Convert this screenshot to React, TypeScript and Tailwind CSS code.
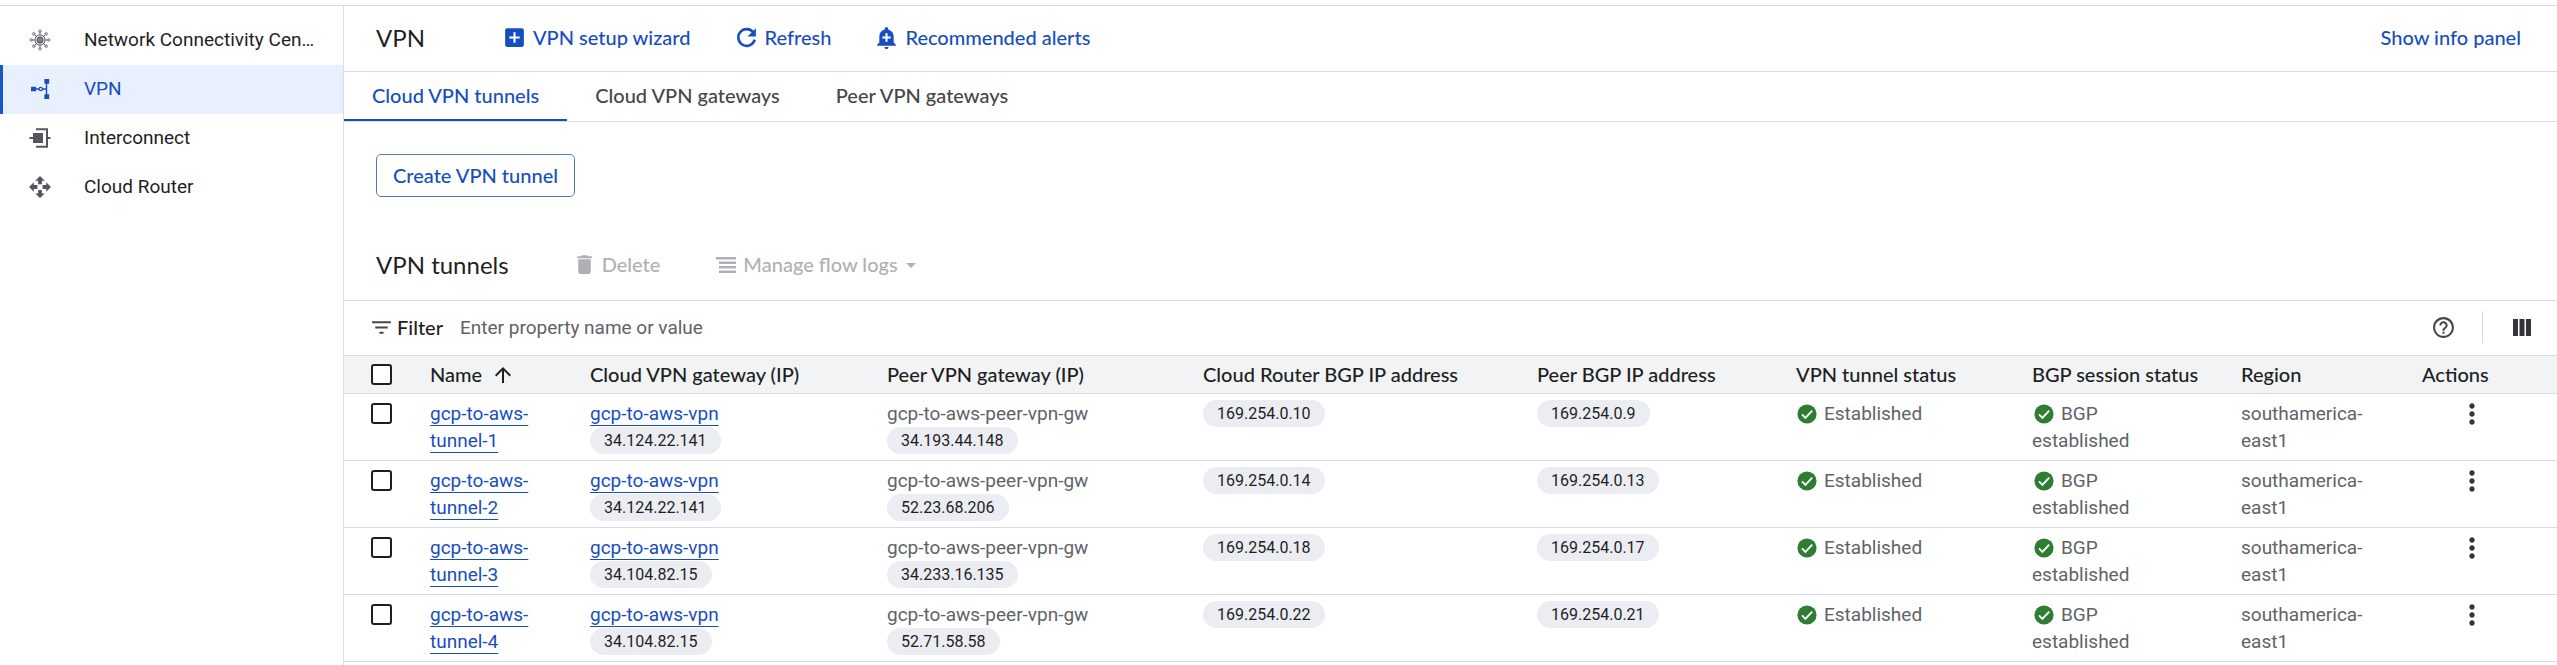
import type { ReactNode } from "react";
import {
  MdAddAlert,
  MdAddBox,
  MdArrowDropDown,
  MdArrowUpward,
  MdDelete,
  MdFilterList,
  MdHelpOutline,
  MdMoreVert,
} from "react-icons/md";

const display = "font-['Lato','Liberation_Sans',sans-serif]";

function HubIcon() {
  const angles = [0, 45, 90, 135, 180, 225, 270, 315];
  return (
    <svg viewBox="0 0 24 24" className="size-6" fill="none" stroke="currentColor" aria-hidden="true">
      <circle cx="12" cy="12" r="5" strokeWidth="1" />
      <circle cx="12" cy="12" r="3.5" fill="currentColor" stroke="none" />
      <path d="M9.5 11h5M9.5 13h5" stroke="white" strokeWidth="0.5" />
      {angles.map((a) => (
        <g key={a} transform={`rotate(${a} 12 12)`}>
          <path d="M12 6.8V4.6" strokeWidth="1" />
          <circle cx="12" cy="3.2" r="1.2" strokeWidth="0.9" />
        </g>
      ))}
    </svg>
  );
}

function VpnIcon() {
  return (
    <svg viewBox="0 0 24 24" className="size-6" aria-hidden="true">
      <path d="M7 12h11.5M18.5 4v16" stroke="currentColor" strokeWidth="1.4" fill="none" />
      <path d="M3 9.8h5v4.4H3zM16.4 2h4.8v4.8h-4.8zM16.4 17.2h4.8V22h-4.8z" fill="currentColor" />
      <circle cx="12.7" cy="12" r="1.7" fill="#e8f0fe" stroke="currentColor" strokeWidth="1.2" />
    </svg>
  );
}

function InterconnectIcon() {
  return (
    <svg viewBox="0 0 24 24" className="size-6" aria-hidden="true">
      <path d="M5 7h10v10H5z" fill="currentColor" />
      <path d="M1.5 12H5M20 12h2.5M8 3.2h11v17.6H8" stroke="currentColor" strokeWidth="2" fill="none" />
    </svg>
  );
}

function RouterIcon() {
  return (
    <svg viewBox="0 0 24 24" className="size-6" fill="currentColor" aria-hidden="true">
      <path d="M12 1l4.8 4.8h-2.9v3.4h-3.8V5.8H7.2zM12 23l-4.8-4.4h2.9V15h3.8v3.6h2.9z" />
      <path d="M1 12l4.8-4.8v2.9h3.6v3.8H5.8v2.9zM23 12l-4.8-4.8v2.9h-3.6v3.8h3.6v2.9z" />
    </svg>
  );
}

function RefreshIcon() {
  return (
    <svg viewBox="0 0 24 24" className="size-[25px]" aria-hidden="true">
      <path d="M18.6 7.2A8 8 0 1 0 19.9 14" fill="none" stroke="currentColor" strokeWidth="2.5" />
      <path d="M21 3v8h-8z" fill="currentColor" />
    </svg>
  );
}

function LogsIcon() {
  return (
    <svg viewBox="0 0 20 16" className="h-4 w-5" aria-hidden="true">
      <path d="M0 1.2h20M3 5.7h17M3 10.2h17M3 14.7h17" stroke="currentColor" strokeWidth="2.5" />
    </svg>
  );
}

function ColumnsIcon() {
  return (
    <svg viewBox="0 0 18 17" className="h-[17px] w-[18px]" fill="currentColor" aria-hidden="true">
      <path d="M0 0h5v17H0zM6.5 0h5v17h-5zM13 0h5v17h-5z" />
    </svg>
  );
}

function StatusIcon() {
  return (
    <svg viewBox="0 0 20 20" className="inline size-5 align-[-4px]" aria-hidden="true">
      <circle cx="10" cy="10" r="9.6" fill="#2e7d32" />
      <path d="M5 10.4l3.4 3.4L15.2 6.6" fill="none" stroke="white" strokeWidth="1.9" />
    </svg>
  );
}

function ToolbarButton({ icon, children }: { icon: ReactNode; children: ReactNode }) {
  return (
    <button type="button" className={`${display} flex items-center gap-[6px] text-[20px] font-medium text-[#174ebf]`}>
      {icon}
      {children}
    </button>
  );
}

function CheckBox({ label }: { label: string }) {
  return (
    <input
      type="checkbox"
      aria-label={label}
      className="block size-[21px] appearance-none rounded-[3px] border-2 border-[#1f1f1f] bg-white checked:bg-[#174ebf]"
    />
  );
}

function Chip({ children }: { children: ReactNode }) {
  return (
    <span className="block w-fit rounded-full bg-[#ecedf2] px-[14px] text-[16px] leading-[27px] text-[#1f1f1f]">
      {children}
    </span>
  );
}

function CellLink({ children }: { children: ReactNode }) {
  return (
    <a
      href="#"
      className="text-[#174ebf] underline decoration-1 underline-offset-[5px] [text-decoration-skip-ink:none]"
    >
      {children}
    </a>
  );
}

const navItems = [
  { label: "Network Connectivity Cen…", icon: <HubIcon />, active: false },
  { label: "VPN", icon: <VpnIcon />, active: true },
  { label: "Interconnect", icon: <InterconnectIcon />, active: false },
  { label: "Cloud Router", icon: <RouterIcon />, active: false },
];

const tabs = ["Cloud VPN tunnels", "Cloud VPN gateways", "Peer VPN gateways"];

const columns = [
  "Cloud VPN gateway (IP)",
  "Peer VPN gateway (IP)",
  "Cloud Router BGP IP address",
  "Peer BGP IP address",
  "VPN tunnel status",
  "BGP session status",
  "Region",
  "Actions",
];

const tunnels = [
  { name: "gcp-to-aws-tunnel-1", ip: "34.124.22.141", peerIp: "34.193.44.148", bgp: "169.254.0.10", peerBgp: "169.254.0.9" },
  { name: "gcp-to-aws-tunnel-2", ip: "34.124.22.141", peerIp: "52.23.68.206", bgp: "169.254.0.14", peerBgp: "169.254.0.13" },
  { name: "gcp-to-aws-tunnel-3", ip: "34.104.82.15", peerIp: "34.233.16.135", bgp: "169.254.0.18", peerBgp: "169.254.0.17" },
  { name: "gcp-to-aws-tunnel-4", ip: "34.104.82.15", peerIp: "52.71.58.58", bgp: "169.254.0.22", peerBgp: "169.254.0.21" },
];

export default function App() {
  return (
    <div className="min-h-screen bg-white pt-[5px] font-['Roboto','Liberation_Sans',sans-serif] text-[19px] leading-[27px] text-[#1f1f1f]">
      <div className="flex min-h-[calc(100vh-5px)] border-t border-[#dadce0]">
        <nav className="w-[344px] shrink-0 border-r border-[#dadce0] pt-[10px]">
          {navItems.map(({ label, icon, active }) => (
            <a
              key={label}
              href="#"
              aria-current={active ? "page" : undefined}
              className={
                active
                  ? "flex h-[49px] items-center gap-8 border-l-[3px] border-[#1a56cb] bg-[#e8f0fe] pr-4 pb-[2px] pl-[25px] text-[#174ebf]"
                  : "flex h-[49px] items-center gap-8 border-l-[3px] border-transparent pr-4 pb-[2px] pl-[25px]"
              }
            >
              <span className={active ? "shrink-0" : "shrink-0 text-[#54585d]"}>{icon}</span>
              <span className="whitespace-nowrap">{label}</span>
            </a>
          ))}
        </nav>

        <main className="min-w-0 flex-1">
          <header className="flex h-[66px] items-center border-b border-[#dadce0] pr-9 pb-[2px] pl-8">
            <h1 className={`${display} mr-[77px] text-[24px]`}>VPN</h1>
            <div className="flex items-center gap-[43px]">
              <ToolbarButton icon={<MdAddBox className="size-[25px]" />}>VPN setup wizard</ToolbarButton>
              <ToolbarButton icon={<RefreshIcon />}>Refresh</ToolbarButton>
              <ToolbarButton icon={<MdAddAlert className="size-[25px]" />}>Recommended alerts</ToolbarButton>
            </div>
            <button type="button" className={`${display} ml-auto text-[20px] font-medium text-[#174ebf]`}>
              Show info panel
            </button>
          </header>

          <div role="tablist" className={`${display} flex h-[50px] border-b border-[#dadce0] text-[20px] font-medium`}>
            {tabs.map((tab, i) => (
              <button
                key={tab}
                type="button"
                role="tab"
                aria-selected={i === 0}
                className={
                  i === 0
                    ? "border-b-2 border-[#174ebf] px-[28px] text-[#174ebf]"
                    : "border-b-2 border-transparent px-[28px] text-[#444746]"
                }
              >
                {tab}
              </button>
            ))}
          </div>

          <div className="px-8 pt-8">
            <button
              type="button"
              className={`${display} h-[43px] rounded-[5px] border border-[#5878bd] px-4 text-[20px] font-medium text-[#174ebf]`}
            >
              Create VPN tunnel
            </button>
          </div>

          <div className="mt-8 flex h-[72px] items-center border-b border-[#dadce0] pl-8">
            <h2 className={`${display} mr-[63px] text-[24px]`}>VPN tunnels</h2>
            <div className={`${display} flex items-center gap-14 text-[20px] font-medium text-[#aeb0b3]`}>
              <button type="button" disabled className="flex items-center gap-[5px]">
                <MdDelete className="size-[25px]" />
                Delete
              </button>
              <button type="button" disabled className="flex items-center gap-[7px]">
                <LogsIcon />
                Manage flow logs
                <MdArrowDropDown className="-ml-[6px] size-6" />
              </button>
            </div>
          </div>

          <div className="flex h-[54px] items-center pr-[26px] pb-[2px] pl-[25px]">
            <MdFilterList className="mr-[3px] size-[25px] text-[#444746]" />
            <label htmlFor="filter" className={`${display} mr-[17px] text-[20px] font-medium`}>
              Filter
            </label>
            <input
              id="filter"
              type="text"
              placeholder="Enter property name or value"
              className="min-w-0 flex-1 bg-transparent outline-none placeholder:text-[#5f6368]"
            />
            <button type="button" aria-label="Help" className="text-[#444746]">
              <MdHelpOutline className="size-[25px]" />
            </button>
            <span className="mr-[30px] ml-[26px] h-8 w-px bg-[#dadce0]" />
            <button type="button" aria-label="Column display options" className="text-[#333639]">
              <ColumnsIcon />
            </button>
          </div>

          <div className="overflow-x-auto">
            <table className="w-full table-fixed border-separate border-spacing-0">
              <colgroup>
                <col className="w-[86px]" />
                <col className="w-[160px]" />
                <col className="w-[297px]" />
                <col className="w-[316px]" />
                <col className="w-[334px]" />
                <col className="w-[259px]" />
                <col className="w-[236px]" />
                <col className="w-[209px]" />
                <col className="w-[181px]" />
                <col className="w-[135px]" />
              </colgroup>
              <thead>
                <tr className="[&>th]:h-[39px] [&>th]:border-y [&>th]:border-[#dadce0] [&>th]:bg-[#f1f3f4]">
                  <th className="pl-[27px]">
                    <CheckBox label="Select all tunnels" />
                  </th>
                  <th className={`${display} text-left text-[20px] font-medium`}>
                    <span className="flex items-center gap-[9px]">
                      Name
                      <MdArrowUpward className="size-6" />
                    </span>
                  </th>
                  {columns.map((c) => (
                    <th key={c} className={`${display} text-left text-[20px] font-medium whitespace-nowrap`}>
                      {c}
                    </th>
                  ))}
                </tr>
              </thead>
              <tbody>
                {tunnels.map((t) => (
                  <tr
                    key={t.name}
                    className="text-[#5f6368] [&>td]:border-b [&>td]:border-[#dadce0] [&>td]:pt-[6px] [&>td]:pb-[6px] [&>td]:align-top"
                  >
                    <td className="pl-[27px]">
                      <div className="flex h-[27px] items-center">
                        <CheckBox label={`Select ${t.name}`} />
                      </div>
                    </td>
                    <td className="pr-14">
                      <CellLink>{t.name}</CellLink>
                    </td>
                    <td>
                      <CellLink>gcp-to-aws-vpn</CellLink>
                      <Chip>{t.ip}</Chip>
                    </td>
                    <td>
                      gcp-to-aws-peer-vpn-gw
                      <Chip>{t.peerIp}</Chip>
                    </td>
                    <td>
                      <Chip>{t.bgp}</Chip>
                    </td>
                    <td>
                      <Chip>{t.peerBgp}</Chip>
                    </td>
                    <td>
                      <span className="flex items-center gap-[7px] pl-px">
                        <StatusIcon />
                        Established
                      </span>
                    </td>
                    <td className="pr-20">
                      <span className="pr-[7px] pl-[2px]">
                        <StatusIcon />
                      </span>
                      BGP established
                    </td>
                    <td className="pr-10">southamerica-east1</td>
                    <td className="pl-[34px]">
                      <button type="button" aria-label={`Actions for ${t.name}`} className="flex h-[27px] items-center text-[#333639]">
                        <MdMoreVert className="size-8" />
                      </button>
                    </td>
                  </tr>
                ))}
              </tbody>
            </table>
          </div>
        </main>
      </div>
    </div>
  );
}
